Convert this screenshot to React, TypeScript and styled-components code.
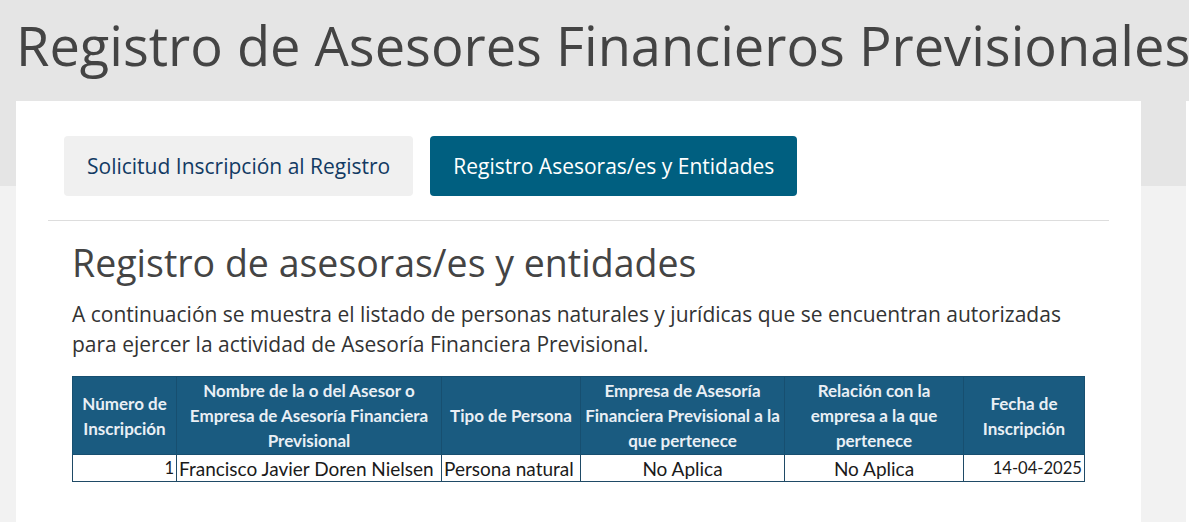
import React from "react";
import styled, { createGlobalStyle } from "styled-components";

const Global = createGlobalStyle`
  html, body { margin: 0; padding: 0; }
  body {
    background: #f2f2f2;
    font-family: "Open Sans", "Noto Sans", sans-serif;
    color: #333;
  }
  * { box-sizing: border-box; }
`;

const Page = styled.div`
  min-height: 522px;
  background: linear-gradient(#e5e5e5 0, #e5e5e5 186px, #f2f2f2 186px);
  overflow: hidden;
`;

const Title = styled.h1`
  margin: 0;
  padding: 9px 0 0 16px;
  height: 101px;
  font-family: "Open Sans", sans-serif;
  font-weight: 400;
  font-size: 54.2px;
  line-height: 72px;
  color: #444;
  white-space: nowrap;
`;

const Columns = styled.div`
  display: flex;
  align-items: stretch;
  gap: 45px;
  padding-left: 16px;
  width: 1600px;
`;

const Card = styled.main`
  flex: 0 0 1124px;
  background: #fff;
  padding: 35px 32px 60px;
`;

const Aside = styled.aside`
  flex: 0 0 300px;
  background: #fff;
`;

const Tabs = styled.nav`
  display: flex;
  gap: 17px;
  padding: 0 16px 24px;
  border-bottom: 1px solid #ddd;
`;

const Tab = styled.button<{ $active?: boolean }>`
  height: 60px;
  padding: 0 23px;
  border: none;
  border-radius: 4px;
  font-family: "Open Sans", sans-serif;
  font-size: 21px;
  background: ${(p) => (p.$active ? "#005f80" : "#f0f0f0")};
  color: ${(p) => (p.$active ? "#fff" : "#123a63")};
  cursor: pointer;
`;

const Section = styled.section`
  padding: 16px 24px 0;
`;

const Heading = styled.h2`
  margin: 0;
  font-weight: 400;
  font-size: 37.5px;
  line-height: 52px;
  color: #444;
`;

const Lead = styled.p`
  margin: 10px 0 17px;
  font-size: 21px;
  line-height: 30px;
  color: #333;
  max-width: 1012px;
`;

const Table = styled.table`
  border-collapse: collapse;
  width: 1012px;
  font-family: Lato, "Liberation Sans", sans-serif;
  table-layout: fixed;
`;

const Th = styled.th<{ $w: number }>`
  width: ${(p) => p.$w}px;
  background: #1a5b80;
  color: #e9eff5;
  font-weight: 700;
  font-size: 17px;
  line-height: 25px;
  height: 78px;
  padding: 0 1px;
  border: 1px solid #174f70;
  text-align: center;
  vertical-align: middle;
  white-space: nowrap;
`;

const Td = styled.td<{ $align?: string; $num?: boolean }>`
  height: 27px;
  padding: 0 2px;
  font-size: ${(p) => (p.$num ? "16.6px" : "19px")};
  color: #1a1a1a;
  border: 1.5px solid #1f4a66;
  text-align: ${(p) => p.$align || "left"};
  white-space: nowrap;
  overflow: hidden;
`;

const cols = [
  { w: 104, lines: ["Número de", "Inscripción"] },
  { w: 265, lines: ["Nombre de la o del Asesor o", "Empresa de Asesoría Financiera", "Previsional"] },
  { w: 139, lines: ["Tipo de Persona"] },
  { w: 204, lines: ["Empresa de Asesoría", "Financiera Previsional a la", "que pertenece"] },
  { w: 179, lines: ["Relación con la", "empresa a la que", "pertenece"] },
  { w: 121, lines: ["Fecha de", "Inscripción"] },
];

export default function App() {
  return (
    <>
      <Global />
      <Page>
        <Title>Registro de Asesores Financieros Previsionales</Title>
        <Columns>
          <Card>
            <Tabs>
              <Tab>Solicitud Inscripción al Registro</Tab>
              <Tab $active>Registro Asesoras/es y Entidades</Tab>
            </Tabs>
            <Section>
              <Heading>Registro de asesoras/es y entidades</Heading>
              <Lead>
                A continuación se muestra el listado de personas naturales y jurídicas que se encuentran
                autorizadas para ejercer la actividad de Asesoría Financiera Previsional.
              </Lead>
              <Table>
                <thead>
                  <tr>
                    {cols.map((c) => (
                      <Th key={c.lines.join(" ")} $w={c.w}>
                        {c.lines.map((l, i) => (
                          <React.Fragment key={l}>
                            {i > 0 && <br />}
                            {l}
                          </React.Fragment>
                        ))}
                      </Th>
                    ))}
                  </tr>
                </thead>
                <tbody>
                  <tr>
                    <Td $align="right" $num>1</Td>
                    <Td>Francisco Javier Doren Nielsen</Td>
                    <Td>Persona natural</Td>
                    <Td $align="center">No Aplica</Td>
                    <Td $align="center">No Aplica</Td>
                    <Td $align="right" $num>14-04-2025</Td>
                  </tr>
                </tbody>
              </Table>
            </Section>
          </Card>
          <Aside />
        </Columns>
      </Page>
    </>
  );
}
